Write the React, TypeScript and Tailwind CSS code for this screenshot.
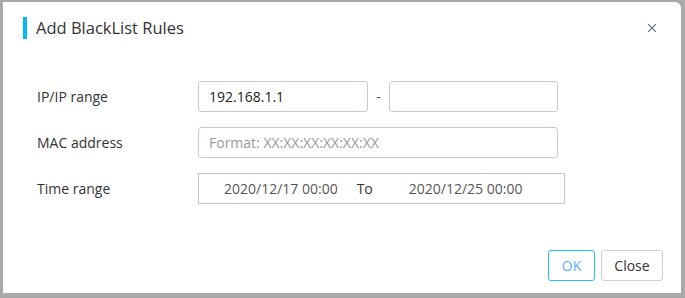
import { X } from 'lucide-react';

const font = { fontFamily: '"Segoe UI", "Open Sans", "Noto Sans", sans-serif' };

export default function App() {
  return (
    <div className="h-[298px] w-[685px] bg-[#a9a9a9] pl-[3px] pt-[2px]" style={font}>
      <div className="flex h-[291px] w-[678px] flex-col rounded-tr-[6px] bg-white">
        <div className="flex h-[52px] items-center justify-between pl-[20px] pr-[22px]">
          <div className="flex items-center">
            <span className="h-[22px] w-[4px] bg-[#00b7ff]" />
            <span className="ml-[9px] text-[16.5px] text-[#333]">Add BlackList Rules</span>
          </div>
          <X className="h-[14px] w-[14px] text-[#6a7f96]" strokeWidth={2} />
        </div>

        <div className="mt-[27px] flex flex-col gap-[15px] pl-[34px] text-[14px] text-[#333]">
          <div className="flex items-center">
            <div className="w-[161px]">IP/IP range</div>
            <div className="flex h-[31px] w-[170px] items-center rounded-[3px] border border-[#c9c9d6] pl-[10px] text-[#222]">192.168.1.1</div>
            <div className="w-[21px] text-center text-[#555]">-</div>
            <div className="h-[31px] w-[169px] rounded-[3px] border border-[#c9c9d6]" />
          </div>
          <div className="flex items-center">
            <div className="w-[161px]">MAC address</div>
            <div className="flex h-[31px] w-[360px] items-center rounded-[3px] border border-[#c9c9d6] pl-[10px] text-[#999]">Format: XX:XX:XX:XX:XX:XX</div>
          </div>
          <div className="flex items-center">
            <div className="w-[161px]">Time range</div>
            <div className="flex h-[31px] w-[367px] items-center border border-[#c6c6c6] pl-[25px] text-[#555]">
              <span>2020/12/17 00:00</span>
              <span className="ml-[19px] text-[#333]">To</span>
              <span className="ml-[36px]">2020/12/25 00:00</span>
            </div>
          </div>
        </div>

        <div className="mt-auto flex justify-end gap-[6px] pb-[12px] pr-[18px]">
          <button className="h-[31px] w-[47px] rounded-[3px] border border-[#1ec0ff] text-[14px] text-[#5aaeff]">OK</button>
          <button className="h-[31px] w-[62px] rounded-[3px] border border-[#d0d0d0] text-[14px] text-[#333]">Close</button>
        </div>
      </div>
    </div>
  );
}
